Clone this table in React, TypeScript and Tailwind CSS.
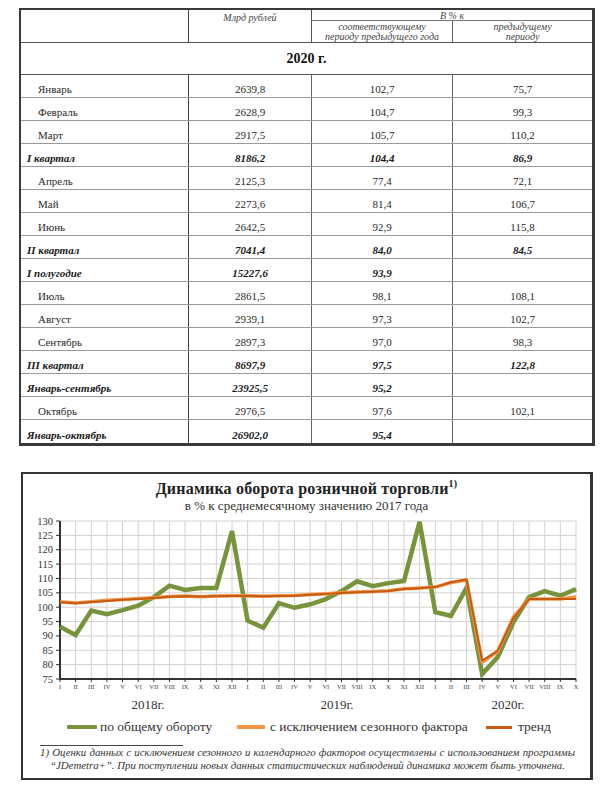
import React from "react";

type Row = { l: string; a: string; b: string; c: string; bold?: boolean };

const rows: Row[] = [
  { l: "Январь", a: "2639,8", b: "102,7", c: "75,7" },
  { l: "Февраль", a: "2628,9", b: "104,7", c: "99,3" },
  { l: "Март", a: "2917,5", b: "105,7", c: "110,2" },
  { l: "I квартал", a: "8186,2", b: "104,4", c: "86,9", bold: true },
  { l: "Апрель", a: "2125,3", b: "77,4", c: "72,1" },
  { l: "Май", a: "2273,6", b: "81,4", c: "106,7" },
  { l: "Июнь", a: "2642,5", b: "92,9", c: "115,8" },
  { l: "II квартал", a: "7041,4", b: "84,0", c: "84,5", bold: true },
  { l: "I полугодие", a: "15227,6", b: "93,9", c: "", bold: true },
  { l: "Июль", a: "2861,5", b: "98,1", c: "108,1" },
  { l: "Август", a: "2939,1", b: "97,3", c: "102,7" },
  { l: "Сентябрь", a: "2897,3", b: "97,0", c: "98,3" },
  { l: "III квартал", a: "8697,9", b: "97,5", c: "122,8", bold: true },
  { l: "Январь-сентябрь", a: "23925,5", b: "95,2", c: "", bold: true },
  { l: "Октябрь", a: "2976,5", b: "97,6", c: "102,1" },
  { l: "Январь-октябрь", a: "26902,0", b: "95,4", c: "", bold: true },
];

const green = [
  93.2, 90.3, 98.8, 97.6, 99, 100.5, 103.5, 107.5, 106, 106.7, 106.7, 126.5,
  95.3, 92.9, 101.4, 99.8, 101, 102.8, 105.6, 109, 107.3, 108.4, 109.1, 129.7,
  98.3, 97, 106.7, 76.7, 82.7, 94.8, 103.5, 105.6, 104, 106.3,
];
const orange = [
  101.9, 101.5, 101.9, 102.4, 102.7, 103, 103.3, 103.7, 103.9, 103.6, 103.9, 104,
  104, 103.8, 104, 104.1, 104.4, 104.7, 105, 105.3, 105.5, 105.7, 106.4, 106.7,
  107, 108.6, 109.5, 80.8, 84.6, 96.6, 102.8, 102.8, 102.8, 103.6,
];
const trend = [
  101.7, 101.4, 101.8, 102.2, 102.6, 102.9, 103.2, 103.6, 103.8, 103.7, 103.8, 103.9,
  103.9, 103.8, 103.9, 104, 104.3, 104.6, 104.9, 105.2, 105.4, 105.6, 106.3, 106.6,
  107, 108.7, 109.6, 81.4, 84.9, 96.3, 102.8, 102.8, 102.8, 102.9,
];

const roman = ["I", "II", "III", "IV", "V", "VI", "VII", "VIII", "IX", "X", "XI", "XII"];
const months = [...roman, ...roman, ...roman.slice(0, 10)];

const X0 = 37;
const XSTEP = 516 / 33;
const TOP = 7;
const YSC = 158 / 55;
const px = (i: number) => X0 + i * XSTEP;
const py = (v: number) => TOP + (130 - v) * YSC;
const pts = (arr: number[]) => arr.map((v, i) => `${px(i).toFixed(1)},${py(v).toFixed(1)}`).join(" ");

const SERIF = "'Liberation Serif', 'DejaVu Serif', serif";

function Chart() {
  const yVals = [130, 125, 120, 115, 110, 105, 100, 95, 90, 85, 80, 75];
  return (
    <svg width={568} height={199} className="block" fontFamily={SERIF}>
      {months.map((_, i) => (
        <line key={"v" + i} x1={px(i)} x2={px(i)} y1={py(130)} y2={py(75)} stroke="#d2d2d2" strokeWidth={1} />
      ))}
      {yVals.map((v) => (
        <line key={"h" + v} x1={X0} x2={X0 + 516} y1={py(v)} y2={py(v)} stroke="#d2d2d2" strokeWidth={1} />
      ))}
      <line x1={X0} x2={X0} y1={py(130)} y2={py(75) + 1} stroke="#333" strokeWidth={2} />
      <line x1={X0} x2={X0 + 516} y1={py(75)} y2={py(75)} stroke="#333" strokeWidth={2} />
      {yVals.map((v) => (
        <g key={"t" + v}>
          <line x1={X0 - 4} x2={X0} y1={py(v)} y2={py(v)} stroke="#333" strokeWidth={1} />
          <text x={30} y={py(v) + 3.5} fontSize={10.5} textAnchor="end" fill="#333" fontFamily={SERIF}>
            {v}
          </text>
        </g>
      ))}
      {months.map((m, i) => (
        <g key={"x" + i}>
          <line x1={px(i)} x2={px(i)} y1={py(75)} y2={py(75) + 3} stroke="#333" strokeWidth={1} />
          <text x={px(i)} y={175} fontSize={6.5} textAnchor="middle" fill="#444" fontFamily={SERIF}>
            {m}
          </text>
        </g>
      ))}
      <polyline points={pts(green)} fill="none" stroke="#77933c" strokeWidth={4.5} strokeLinejoin="miter" strokeMiterlimit={3} />
      <polyline points={pts(orange)} fill="none" stroke="#f79646" strokeWidth={3.5} strokeLinejoin="round" />
      <polyline points={pts(trend)} fill="none" stroke="#c55a11" strokeWidth={2} strokeLinejoin="round" />
      <text x={125} y={195} fontSize={13} textAnchor="middle" fill="#333" fontFamily={SERIF}>2018г.</text>
      <text x={314} y={195} fontSize={13} textAnchor="middle" fill="#333" fontFamily={SERIF}>2019г.</text>
      <text x={485} y={195} fontSize={13} textAnchor="middle" fill="#333" fontFamily={SERIF}>2020г.</text>
    </svg>
  );
}

function Cell({ children, className = "" }: { children?: React.ReactNode; className?: string }) {
  return <div className={`flex items-end justify-center pb-[1px] ${className}`}>{children}</div>;
}

export default function App() {
  return (
    <div className="w-[613px] h-[799px] bg-white overflow-hidden text-[#2a2a2a] font-['Liberation_Serif','DejaVu_Serif',serif]">
      {/* Table */}
      <div className="ml-[19px] mt-[8px] w-[576px] border-2 border-r-[3px] border-b-[3px] border-[#3a3a3a]">
        <div className="flex h-[33px] border-b border-[#555]">
          <div className="w-[168px] border-r border-[#444]" />
          <div className="w-[123px] border-r border-[#555] text-center text-[10px] italic leading-[12px] pt-[2px] text-[#444]">
            Млрд рублей
          </div>
          <div className="flex-1 flex flex-col">
            <div className="h-[11px] border-b border-[#777] text-center text-[10px] italic leading-[11px] text-[#444]">
              В % к
            </div>
            <div className="flex-1 flex">
              <div className="w-[141px] border-r border-[#666] flex flex-col justify-center text-center text-[10px] italic leading-[10px] text-[#444]">
                <span>соответствующему</span>
                <span>периоду предыдущего года</span>
              </div>
              <div className="flex-1 flex flex-col justify-center text-center text-[10px] italic leading-[10px] text-[#444]">
                <span>предыдущему</span>
                <span>периоду</span>
              </div>
            </div>
          </div>
        </div>
        <div className="h-[32px] border-b border-[#555] flex items-center justify-center text-[14px] font-bold text-[#111]">
          2020 г.
        </div>
        {rows.map((r, i) => (
          <div
            key={i}
            className={`flex h-[23px] text-[11px] leading-[13px] ${i < rows.length - 1 ? "border-b border-[#9a9a9a]" : ""} ${
              r.bold ? "font-bold italic text-[#1a1a1a]" : ""
            }`}
          >
            <div className={`w-[168px] border-r border-[#444] flex items-end pb-[1px] ${r.bold ? "pl-[6px]" : "pl-[17px]"}`}>
              {r.l}
            </div>
            <Cell className="w-[123px] border-r border-[#666]">{r.a}</Cell>
            <Cell className="w-[141px] border-r border-[#666]">{r.b}</Cell>
            <Cell className="flex-1">{r.c}</Cell>
          </div>
        ))}
      </div>

      {/* Chart */}
      <div className="ml-[21px] mt-[26px] w-[572px] h-[308px] border-2 border-r-[3px] border-[#333] flex flex-col">
        <div className="pt-[6px] text-center text-[16px] leading-[18px] font-bold text-[#222] tracking-[0.2px]">
          Динамика оборота розничной торговли
          <sup className="text-[10px] top-[-0.7em]">1)</sup>
        </div>
        <div className="text-center text-[13px] leading-[15px] text-[#333]">
          в % к среднемесячному значению 2017 года
        </div>
        <div className="mt-[1px]">
          <Chart />
        </div>
        <div className="mt-[6px] flex items-center h-[16px] text-[13.5px] leading-[16px] text-[#333]">
          <div className="ml-[44px] w-[170px] flex items-center">
            <span className="block w-[30px] h-[4px] bg-[#77933c] rounded-[1px]" />
            <span className="ml-[3px]">по общему обороту</span>
          </div>
          <div className="w-[249px] flex items-center">
            <span className="block w-[28px] h-[4px] bg-[#f79646] rounded-[1px]" />
            <span className="ml-[5px]">с исключением сезонного фактора</span>
          </div>
          <div className="flex items-center">
            <span className="block w-[26px] h-[3px] bg-[#c55a11]" />
            <span className="ml-[6px]">тренд</span>
          </div>
        </div>
        <div className="ml-[17px] mt-[10px] w-[143px] h-[1px] bg-[#444]" />
        <div className="ml-[17px] w-[535px] text-[10.8px] leading-[13px] italic text-[#333] [text-align-last:justify] whitespace-nowrap">
          1) Оценки данных с исключением сезонного и календарного факторов осуществлены с использованием программы
        </div>
        <div className="ml-[27px] text-[10.8px] leading-[13px] italic text-[#333] whitespace-nowrap">
          “JDemetra+”. При поступлении новых данных статистических наблюдений динамика может быть уточнена.
        </div>
      </div>
    </div>
  );
}
